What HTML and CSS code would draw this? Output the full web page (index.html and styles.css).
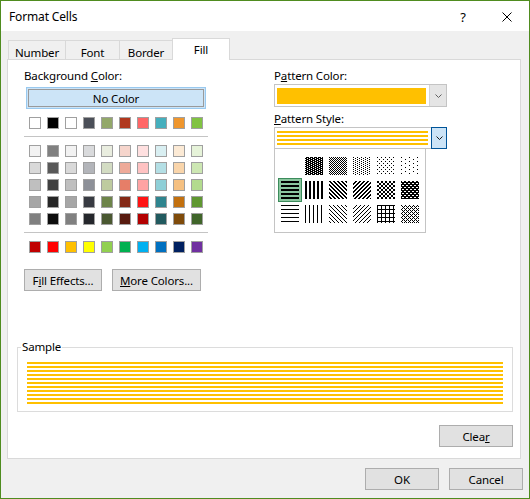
FILE: index.html
```html
<!DOCTYPE html>
<html>
<head>
<meta charset="utf-8">
<link rel="stylesheet" href="styles.css">
</head>
<body>
<svg class="defs" width="0" height="0">
  <defs>
    <pattern id="p75" width="4" height="2" patternUnits="userSpaceOnUse"><rect width="4" height="2" fill="#000"/><rect x="0" y="0" width="1" height="1" fill="#fff"/><rect x="2" y="1" width="1" height="1" fill="#fff"/></pattern>
    <pattern id="p50" width="2" height="2" patternUnits="userSpaceOnUse"><rect x="0" y="0" width="1" height="1" fill="#000"/><rect x="1" y="1" width="1" height="1" fill="#000"/></pattern>
    <pattern id="p25" width="4" height="2" patternUnits="userSpaceOnUse"><rect x="0" y="0" width="1" height="1" fill="#000"/><rect x="2" y="1" width="1" height="1" fill="#000"/></pattern>
    <pattern id="p12" width="4" height="4" patternUnits="userSpaceOnUse"><rect x="0" y="0" width="1" height="1" fill="#000"/><rect x="2" y="2" width="1" height="1" fill="#000"/></pattern>
    <pattern id="p6" width="8" height="4" patternUnits="userSpaceOnUse"><rect x="0" y="0" width="1" height="1" fill="#000"/><rect x="4" y="2" width="1" height="1" fill="#000"/></pattern>
    <pattern id="hs" width="4" height="4" patternUnits="userSpaceOnUse"><rect x="0" y="0" width="4" height="2" fill="#000"/></pattern>
    <pattern id="vs" width="4" height="4" patternUnits="userSpaceOnUse"><rect x="0" y="0" width="2" height="4" fill="#000"/></pattern>
    <pattern id="rd" width="4" height="4" patternUnits="userSpaceOnUse"><rect x="0" y="0" width="2" height="1" fill="#000"/><rect x="1" y="1" width="2" height="1" fill="#000"/><rect x="2" y="2" width="2" height="1" fill="#000"/><rect x="3" y="3" width="1" height="1" fill="#000"/><rect x="0" y="3" width="1" height="1" fill="#000"/></pattern>
    <pattern id="dd" width="4" height="4" patternUnits="userSpaceOnUse"><rect x="2" y="0" width="2" height="1" fill="#000"/><rect x="1" y="1" width="2" height="1" fill="#000"/><rect x="0" y="2" width="2" height="1" fill="#000"/><rect x="3" y="3" width="1" height="1" fill="#000"/><rect x="0" y="3" width="1" height="1" fill="#000"/></pattern>
    <pattern id="dc" width="4" height="4" patternUnits="userSpaceOnUse"><rect x="0" y="0" width="2" height="2" fill="#000"/><rect x="2" y="2" width="2" height="2" fill="#000"/></pattern>
    <pattern id="tdc" width="4" height="4" patternUnits="userSpaceOnUse"><rect width="4" height="4" fill="#000"/><rect x="1" y="0" width="2" height="1" fill="#fff"/><rect x="3" y="2" width="1" height="1" fill="#fff"/><rect x="0" y="2" width="1" height="1" fill="#fff"/></pattern>
    <pattern id="ths" width="4" height="4" patternUnits="userSpaceOnUse"><rect x="0" y="0" width="4" height="1" fill="#000"/></pattern>
    <pattern id="tvs" width="4" height="4" patternUnits="userSpaceOnUse"><rect x="0" y="0" width="1" height="4" fill="#000"/></pattern>
    <pattern id="trd" width="4" height="4" patternUnits="userSpaceOnUse"><rect x="0" y="0" width="1" height="1" fill="#000"/><rect x="1" y="1" width="1" height="1" fill="#000"/><rect x="2" y="2" width="1" height="1" fill="#000"/><rect x="3" y="3" width="1" height="1" fill="#000"/></pattern>
    <pattern id="tdd" width="4" height="4" patternUnits="userSpaceOnUse"><rect x="3" y="0" width="1" height="1" fill="#000"/><rect x="2" y="1" width="1" height="1" fill="#000"/><rect x="1" y="2" width="1" height="1" fill="#000"/><rect x="0" y="3" width="1" height="1" fill="#000"/></pattern>
    <pattern id="thc" width="4" height="4" patternUnits="userSpaceOnUse"><rect x="0" y="0" width="4" height="1" fill="#000"/><rect x="0" y="0" width="1" height="4" fill="#000"/></pattern>
    <pattern id="tdx" width="4" height="4" patternUnits="userSpaceOnUse"><rect x="0" y="0" width="1" height="1" fill="#000"/><rect x="1" y="1" width="1" height="1" fill="#000"/><rect x="2" y="2" width="1" height="1" fill="#000"/><rect x="3" y="3" width="1" height="1" fill="#000"/><rect x="3" y="1" width="1" height="1" fill="#000"/><rect x="1" y="3" width="1" height="1" fill="#000"/></pattern>
  </defs>
</svg>
<div class="window">
  <div class="titlebar">
    <span class="title">Format Cells</span>
    <span class="help">?</span>
    <svg class="close" width="10" height="10" viewBox="0 0 10 10"><path d="M0.5 0.5 L9.5 9.5 M9.5 0.5 L0.5 9.5" stroke="#000" stroke-width="1" fill="none"/></svg>
  </div>
  <div class="tabs">
    <div class="tab t-number">Number</div>
    <div class="tab t-font">Font</div>
    <div class="tab t-border">Border</div>
    <div class="tab t-fill active">Fill</div>
  </div>
  <div class="panel">
    <div class="top">
      <div class="bgcol">
        <div class="label">Background <u>C</u>olor:</div>
        <div class="nocolor"><div class="nocolor-in">No Color</div></div>
        <div class="swrow">
          <span class="sw" style="background:#ffffff"></span><span class="sw" style="background:#000000"></span><span class="sw" style="background:#ffffff"></span><span class="sw" style="background:#4b4f58"></span><span class="sw" style="background:#93a86a"></span><span class="sw" style="background:#b0381e"></span><span class="sw" style="background:#ff6666"></span><span class="sw" style="background:#45afbd"></span><span class="sw" style="background:#ef962d"></span><span class="sw" style="background:#81c342"></span>
        </div>
        <div class="sep"></div>
        <div class="swgrid">
          <span class="sw" style="background:#f2f2f2"></span><span class="sw" style="background:#808080"></span><span class="sw" style="background:#f2f2f2"></span><span class="sw" style="background:#d9dadc"></span><span class="sw" style="background:#e9eddf"></span><span class="sw" style="background:#f6d5cc"></span><span class="sw" style="background:#ffe0e0"></span><span class="sw" style="background:#d9eff2"></span><span class="sw" style="background:#fcead5"></span><span class="sw" style="background:#e6f3d9"></span>
          <span class="sw" style="background:#d9d9d9"></span><span class="sw" style="background:#595959"></span><span class="sw" style="background:#d9d9d9"></span><span class="sw" style="background:#b3b5ba"></span><span class="sw" style="background:#d3dcc3"></span><span class="sw" style="background:#eeaa99"></span><span class="sw" style="background:#ffc2c2"></span><span class="sw" style="background:#b4dfe5"></span><span class="sw" style="background:#f9d5ab"></span><span class="sw" style="background:#cde7b3"></span>
          <span class="sw" style="background:#bfbfbf"></span><span class="sw" style="background:#404040"></span><span class="sw" style="background:#bfbfbf"></span><span class="sw" style="background:#8d9098"></span><span class="sw" style="background:#becb9f"></span><span class="sw" style="background:#e67e68"></span><span class="sw" style="background:#ffa3a3"></span><span class="sw" style="background:#8ecfd7"></span><span class="sw" style="background:#f5c081"></span><span class="sw" style="background:#b3db8e"></span>
          <span class="sw" style="background:#a6a6a6"></span><span class="sw" style="background:#262626"></span><span class="sw" style="background:#a6a6a6"></span><span class="sw" style="background:#383b42"></span><span class="sw" style="background:#6d844a"></span><span class="sw" style="background:#842916"></span><span class="sw" style="background:#ff1313"></span><span class="sw" style="background:#2f848e"></span><span class="sw" style="background:#c2700f"></span><span class="sw" style="background:#5f9731"></span>
          <span class="sw" style="background:#808080"></span><span class="sw" style="background:#0d0d0d"></span><span class="sw" style="background:#808080"></span><span class="sw" style="background:#25272c"></span><span class="sw" style="background:#4a5831"></span><span class="sw" style="background:#581b0f"></span><span class="sw" style="background:#b30000"></span><span class="sw" style="background:#225a5f"></span><span class="sw" style="background:#7f4b0a"></span><span class="sw" style="background:#40652a"></span>
        </div>
        <div class="sep"></div>
        <div class="swrow">
          <span class="sw" style="background:#c00000"></span><span class="sw" style="background:#ff0000"></span><span class="sw" style="background:#ffc000"></span><span class="sw" style="background:#ffff00"></span><span class="sw" style="background:#92d050"></span><span class="sw" style="background:#00b050"></span><span class="sw" style="background:#00b0f0"></span><span class="sw" style="background:#0070c0"></span><span class="sw" style="background:#002060"></span><span class="sw" style="background:#7030a0"></span>
        </div>
        <div class="btnrow">
          <button class="btn b-fill">F<u>i</u>ll Effects...</button>
          <button class="btn b-more"><u>M</u>ore Colors...</button>
        </div>
      </div>
      <div class="patcol">
        <div class="label">P<u>a</u>ttern Color:</div>
        <div class="combo c1">
          <div class="val yellow"></div>
          <div class="arrow"><svg width="7" height="4" viewBox="0 0 7 4"><path d="M0.5 0.5 L3.5 3.5 L6.5 0.5" stroke="#606060" fill="none"/></svg></div>
        </div>
        <div class="label lab2"><u>P</u>attern Style:</div>
        <div class="combo c2">
          <div class="val stripes"></div>
          <div class="arrow hot"><svg width="7" height="4" viewBox="0 0 7 4"><path d="M0.5 0.5 L3.5 3.5 L6.5 0.5" stroke="#1a1a1a" fill="none"/></svg></div>
          <div class="popup">
            <div class="pgrid">
              <div class="pc"></div>
              <div class="pc"><svg class="pat"><rect width="18" height="18" fill="url(#p75)"/></svg></div>
              <div class="pc"><svg class="pat"><rect width="18" height="18" fill="url(#p50)"/></svg></div>
              <div class="pc"><svg class="pat"><rect width="18" height="18" fill="url(#p25)"/></svg></div>
              <div class="pc"><svg class="pat"><rect width="18" height="18" fill="url(#p12)"/></svg></div>
              <div class="pc"><svg class="pat"><rect width="18" height="18" fill="url(#p6)"/></svg></div>
              <div class="pc sel"><svg class="pat"><rect width="18" height="18" fill="url(#hs)"/></svg></div>
              <div class="pc"><svg class="pat"><rect width="18" height="18" fill="url(#vs)"/></svg></div>
              <div class="pc"><svg class="pat"><rect width="18" height="18" fill="url(#rd)"/></svg></div>
              <div class="pc"><svg class="pat"><rect width="18" height="18" fill="url(#dd)"/></svg></div>
              <div class="pc"><svg class="pat"><rect width="18" height="18" fill="url(#dc)"/></svg></div>
              <div class="pc"><svg class="pat"><rect width="18" height="18" fill="url(#tdc)"/></svg></div>
              <div class="pc"><svg class="pat"><rect width="18" height="18" fill="url(#ths)"/></svg></div>
              <div class="pc"><svg class="pat"><rect width="18" height="18" fill="url(#tvs)"/></svg></div>
              <div class="pc"><svg class="pat"><rect width="18" height="18" fill="url(#trd)"/></svg></div>
              <div class="pc"><svg class="pat"><rect width="18" height="18" fill="url(#tdd)"/></svg></div>
              <div class="pc"><svg class="pat"><rect width="18" height="18" fill="url(#thc)"/></svg></div>
              <div class="pc"><svg class="pat"><rect width="18" height="18" fill="url(#tdx)"/></svg></div>
            </div>
          </div>
        </div>
      </div>
    </div>
    <fieldset class="sample">
      <legend>Sample</legend>
      <div class="sfill"></div>
    </fieldset>
    <div class="clearrow"><button class="btn b-clear">Clea<u>r</u></button></div>
  </div>
  <div class="footer">
    <button class="btn b-ok">OK</button>
    <button class="btn b-cancel">Cancel</button>
  </div>
</div>
</body>
</html>
```
FILE: styles.css
```css
* { box-sizing: border-box; }
html, body { margin: 0; padding: 0; }
body {
  font-family: "Noto Sans", "Segoe UI", sans-serif;
  font-size: 11.5px;
  letter-spacing: -0.15px;
  color: #000;
  background: #fff;
}
.defs { display: block; width: 0; height: 0; overflow: hidden; }

.window {
  width: 530px;
  height: 499px;
  border: 1px solid #4f8c1f;
  background: #f0f0f0;
  display: flex;
  flex-direction: column;
}

.titlebar {
  flex: none;
  height: 30px;
  background: #fff;
  display: flex;
  align-items: center;
  padding: 2px 0 0 8px;
}
.title { flex: 1; line-height: 16px; font-size: 12px; }
.help { width: 12px; text-align: center; font-size: 13px; margin-right: 33px; margin-top: -1px; }
.close { display: block; margin-right: 17px; margin-top: -1px; }

.tabs {
  flex: none;
  height: 28px;
  padding: 7px 0 0 7px;
  display: flex;
  align-items: flex-end;
}
.tab {
  height: 19px;
  border: 1px solid #d9d9d9;
  border-bottom: none;
  background: #f0f0f0;
  text-align: center;
  padding-top: 4px;
  line-height: 16px;
  margin-left: -1px;
}
.tab:first-child { margin-left: 0; }
.t-number { width: 58px; }
.t-font { width: 55px; }
.t-border { width: 54px; }
.t-fill { width: 58px; }
.tab.active {
  height: 22px;
  background: #fff;
  margin-bottom: -1px;
  padding-top: 3px;
  position: relative;
  z-index: 1;
}

.panel {
  flex: none;
  margin-left: 6px;
  width: 514px;
  height: 400px;
  border: 1px solid #d9d9d9;
  background: #fff;
  padding: 7px 7px 0 9px;
}

.top {
  display: grid;
  grid-template-columns: 184px 173px;
  column-gap: 66px;
  padding-left: 7px;
  align-items: start;
}
.label { line-height: 16px; height: 16px; padding-top: 1px; }

.nocolor {
  margin: 4px 0 0 2px;
  width: 180px;
  height: 22px;
  border: 1px solid #99c9ef;
  background: #cce4f7;
  padding: 1px;
}
.nocolor-in {
  height: 18px;
  border: 1px solid #9a9a9a;
  text-align: center;
  line-height: 16px;
  padding-top: 1px;
}

.swrow {
  margin-top: 8px;
  padding-left: 5px;
  display: flex;
  gap: 6px;
}
.swgrid {
  margin-top: 8px;
  padding-left: 5px;
  display: grid;
  grid-template-columns: repeat(10, 12px);
  column-gap: 6px;
  row-gap: 5px;
}
.sw {
  display: block;
  width: 12px;
  height: 12px;
  border: 1px solid #a0a0a0;
}
.sep {
  margin-top: 7px;
  height: 1px;
  width: 184px;
  background: #c4c4c4;
}

.btn {
  height: 22px;
  padding: 2px 0 0 0;
  border: 1px solid #adadad;
  background: #e1e1e1;
  font-family: inherit;
  font-size: 11.5px;
  letter-spacing: -0.15px;
  color: #000;
  line-height: 16px;
}
.btnrow {
  margin-top: 16px;
  display: flex;
  gap: 10px;
}
.b-fill { width: 78px; }
.b-more { width: 89px; }

.combo {
  display: flex;
  width: 173px;
  border: 1px solid #c4c4c4;
  background: #fff;
}
.c1 {
  margin-top: 1px;
  height: 23px;
  padding: 3px 0 2px 2px;
}
.c1 .val { flex: 1; background: #ffc000; margin-right: 3px; }
.c1 .arrow {
  margin: -3px 0 -2px 0;
  width: 17px;
  background: #e5e5e5;
  border-left: 1px solid #d4d4d4;
  display: flex;
  align-items: center;
  justify-content: center;
}
.lab2 { margin-top: 3px; }
.c2 {
  margin-top: 1px;
  height: 22px;
  padding: 3px 0 0 2px;
  position: relative;
}
.c2 .val {
  flex: 1;
  height: 14px;
  margin-right: 3px;
  background: repeating-linear-gradient(to bottom, #ffc000 0 2px, transparent 2px 4px);
}
.arrow.hot {
  margin: -4px -1px -1px 0;
  width: 16px;
  background: #cce4f7;
  border: 1px solid #005499;
  display: flex;
  align-items: center;
  justify-content: center;
}

.popup {
  position: absolute;
  left: -1px;
  top: 100%;
  width: 152px;
  height: 85px;
  background: #fff;
  border: 1px solid #c4c4c4;
  padding: 5px 0 0 3px;
  z-index: 2;
}
.pgrid {
  display: grid;
  grid-template-columns: repeat(6, 24px);
  grid-auto-rows: 24px;
}
.pc {
  display: flex;
  align-items: center;
  justify-content: center;
}
.pc.sel {
  border: 1px solid #3c8c5c;
  background: #8ac59e;
}
.pat {
  display: block;
  width: 18px;
  height: 18px;
  shape-rendering: crispEdges;
}

.sample {
  margin: 48px 0 0 0;
  padding: 7px 9px 7px 3px;
  border: 1px solid #dcdcdc;
  min-inline-size: 0;
}
.sample legend {
  padding: 0 1px;
  line-height: 16px;
}
.sfill {
  margin-left: 6px;
  height: 42px;
  background: repeating-linear-gradient(to bottom, #ffc000 0 2px, transparent 2px 4px);
}

.clearrow {
  margin-top: 13px;
  display: flex;
  justify-content: flex-end;
}
.b-clear { width: 74px; }

.footer {
  flex: none;
  margin-top: 9px;
  display: flex;
  justify-content: flex-end;
  gap: 10px;
  padding-right: 6px;
}
.b-ok, .b-cancel { width: 74px; }
```
